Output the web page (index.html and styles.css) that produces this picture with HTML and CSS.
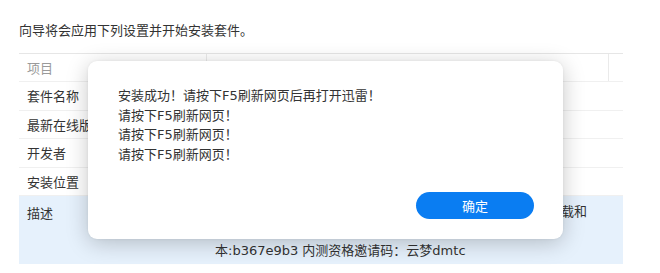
FILE: index.html
```html
<!DOCTYPE html>
<html>
<head>
<meta charset="utf-8">
<link rel="stylesheet" href="styles.css">
</head>
<body>
<div class="page">
  <p class="intro">向导将会应用下列设置并开始安装套件。</p>
  <div class="table">
    <div class="row head">
      <div class="c1">项目</div>
      <div class="c2">值</div>
      <div class="c3"></div>
    </div>
    <div class="row"><div class="c1">套件名称</div><div class="c2"></div></div>
    <div class="row"><div class="c1">最新在线版本</div><div class="c2"></div></div>
    <div class="row"><div class="c1">开发者</div><div class="c2"></div></div>
    <div class="row"><div class="c1">安装位置</div><div class="c2"></div></div>
    <div class="row desc">
      <div class="c1">描述</div>
      <div class="c2 desctext">
        <div class="line l1">载和</div>
        <div class="line"></div>
        <div class="line">本:b367e9b3 内测资格邀请码：云梦dmtc</div>
      </div>
    </div>
  </div>
  <div class="dialog">
    <div class="msg">
      <div>安装成功！请按下F5刷新网页后再打开迅雷！</div>
      <div>请按下F5刷新网页！</div>
      <div>请按下F5刷新网页！</div>
      <div>请按下F5刷新网页！</div>
    </div>
    <div class="actions"><button class="ok">确定</button></div>
  </div>
</div>
</body>
</html>
```
FILE: styles.css
```css
* { box-sizing: border-box; }
html, body { margin: 0; padding: 0; background: #fff; }
body {
  font-family: "DejaVu Sans", "Noto Sans CJK SC", sans-serif;
  font-size: 13px;
  color: #333;
  width: 660px;
  height: 273px;
  overflow: hidden;
}
.page {
  position: relative;
  padding: 20px 37px 0 19px;
}
.intro {
  margin: 0 0 13px 0;
  line-height: 20px;
  font-family: "Noto Sans CJK SC", sans-serif;
}
.table {
  border-top: 1px solid #e6e6e6;
  width: 604px;
}
.row {
  display: flex;
  height: 28.5px;
  border-bottom: 1px solid #f0f0f0;
  align-items: center;
}
.row.head { height: 28px; color: #9a9a9a; }
.c1 {
  width: 188px;
  padding-left: 8px;
  font-family: "Noto Sans CJK SC", sans-serif;
  flex: none;
  white-space: nowrap;
}
.head .c1 { border-right: 1px solid #eaeaea; height: 100%; display: flex; align-items: center; }
.c2 { flex: 1; padding-left: 10px; }
.head .c3 { width: 15px; height: 100%; border-left: 1px solid #eaeaea; }
.row.desc {
  height: 68px;
  align-items: flex-start;
  background: #e6f1fc;
  border-bottom: none;
  padding-top: 5px;
}
.desc .c1 { padding-top: 2px; }
.desctext { padding-left: 8px; padding-right: 36px; }
.line { line-height: 20px; height: 20px; white-space: nowrap; }
.l1 { text-align: right; font-family: "Noto Sans CJK SC", sans-serif; }
.dialog {
  position: absolute;
  left: 88px;
  top: 61px;
  width: 475px;
  height: 178px;
  background: #fff;
  border-radius: 9px;
  box-shadow: 0 4px 22px rgba(0,0,0,0.22), 0 0 3px rgba(0,0,0,0.06);
  display: flex;
  flex-direction: column;
  padding: 25px 29px 20px 30px;
}
.msg { flex: 1; line-height: 19.5px; }
.actions { display: flex; justify-content: flex-end; }
.ok {
  width: 118px;
  height: 27px;
  border: none;
  border-radius: 14px;
  background: #0a7df2;
  color: #fff;
  font-family: "Noto Sans CJK SC", sans-serif;
  font-size: 13px;
  padding: 0;
}
```
